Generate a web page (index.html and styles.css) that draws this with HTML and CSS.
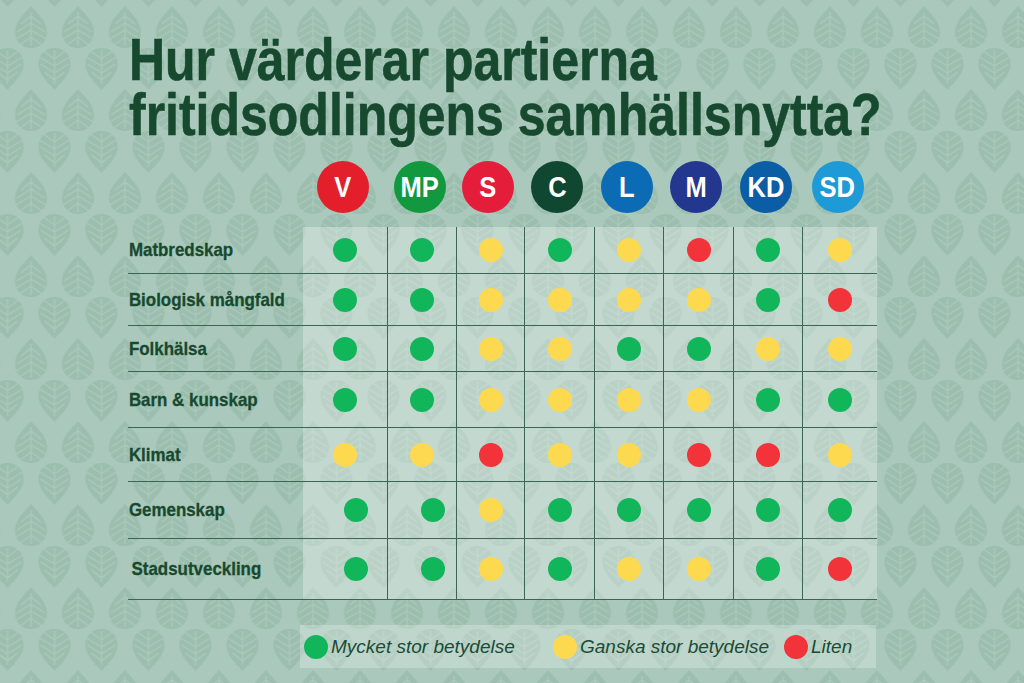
FILE: index.html
```html
<!DOCTYPE html>
<html lang="sv">
<head>
<meta charset="utf-8">
<title>Hur värderar partierna fritidsodlingens samhällsnytta?</title>
<link rel="stylesheet" href="styles.css">
</head>
<body>
<svg class="bg" width="1024" height="683" aria-hidden="true">
  <defs>
    <g id="leaf">
      <path class="leaf-body" d="M0,-21 C6,-14 16,-6 16,5 C16,15 9,21 0,21 C-9,21 -16,15 -16,5 C-16,-6 -6,-14 0,-21 Z"/>
      <path class="leaf-vein" d="M0,-15 L0,19 M-10,-3 L0,-11 L10,-3 M-14,5 L0,-4 L14,5 M-15,12 L0,3 L15,12 M-11,18 L0,10 L11,18"/>
    </g>
    <pattern id="leaves" patternUnits="userSpaceOnUse" x="7.5" y="0" width="47" height="83">
      <use href="#leaf" transform="translate(23.5,27)"/>
      <use href="#leaf" transform="translate(0,69) rotate(180)"/>
      <use href="#leaf" transform="translate(47,69) rotate(180)"/>
      <use href="#leaf" transform="translate(0,-14) rotate(180)"/>
      <use href="#leaf" transform="translate(47,-14) rotate(180)"/>
    </pattern>
  </defs>
  <rect width="1024" height="683" fill="url(#leaves)"/>
</svg>

<main class="page">
  <h1 class="title">Hur värderar partierna<br>fritidsodlingens samhällsnytta?</h1>

  <div class="parties">
    <span class="spacer"></span>
    <span class="cell"><span class="party v"><span class="abbr">V</span></span></span>
    <span class="cell"><span class="party mp"><span class="abbr">MP</span></span></span>
    <span class="cell"><span class="party s"><span class="abbr">S</span></span></span>
    <span class="cell"><span class="party c"><span class="abbr">C</span></span></span>
    <span class="cell"><span class="party l"><span class="abbr">L</span></span></span>
    <span class="cell"><span class="party m"><span class="abbr">M</span></span></span>
    <span class="cell"><span class="party kd"><span class="abbr">KD</span></span></span>
    <span class="cell"><span class="party sd"><span class="abbr">SD</span></span></span>
  </div>

  <div class="table">
    <div class="row r1">
      <span class="label">Matbredskap</span>
      <span class="cell"><i class="dot g"></i></span>
      <span class="cell"><i class="dot g"></i></span>
      <span class="cell"><i class="dot y"></i></span>
      <span class="cell"><i class="dot g"></i></span>
      <span class="cell"><i class="dot y"></i></span>
      <span class="cell"><i class="dot r"></i></span>
      <span class="cell"><i class="dot g"></i></span>
      <span class="cell"><i class="dot y"></i></span>
    </div>
    <div class="row r2">
      <span class="label">Biologisk mångfald</span>
      <span class="cell"><i class="dot g"></i></span>
      <span class="cell"><i class="dot g"></i></span>
      <span class="cell"><i class="dot y"></i></span>
      <span class="cell"><i class="dot y"></i></span>
      <span class="cell"><i class="dot y"></i></span>
      <span class="cell"><i class="dot y"></i></span>
      <span class="cell"><i class="dot g"></i></span>
      <span class="cell"><i class="dot r"></i></span>
    </div>
    <div class="row r3">
      <span class="label">Folkhälsa</span>
      <span class="cell"><i class="dot g"></i></span>
      <span class="cell"><i class="dot g"></i></span>
      <span class="cell"><i class="dot y"></i></span>
      <span class="cell"><i class="dot y"></i></span>
      <span class="cell"><i class="dot g"></i></span>
      <span class="cell"><i class="dot g"></i></span>
      <span class="cell"><i class="dot y"></i></span>
      <span class="cell"><i class="dot y"></i></span>
    </div>
    <div class="row r4">
      <span class="label">Barn &amp; kunskap</span>
      <span class="cell"><i class="dot g"></i></span>
      <span class="cell"><i class="dot g"></i></span>
      <span class="cell"><i class="dot y"></i></span>
      <span class="cell"><i class="dot y"></i></span>
      <span class="cell"><i class="dot y"></i></span>
      <span class="cell"><i class="dot y"></i></span>
      <span class="cell"><i class="dot g"></i></span>
      <span class="cell"><i class="dot g"></i></span>
    </div>
    <div class="row r5">
      <span class="label">Klimat</span>
      <span class="cell"><i class="dot y"></i></span>
      <span class="cell"><i class="dot y"></i></span>
      <span class="cell"><i class="dot r"></i></span>
      <span class="cell"><i class="dot y"></i></span>
      <span class="cell"><i class="dot y"></i></span>
      <span class="cell"><i class="dot r"></i></span>
      <span class="cell"><i class="dot r"></i></span>
      <span class="cell"><i class="dot y"></i></span>
    </div>
    <div class="row r6">
      <span class="label">Gemenskap</span>
      <span class="cell"><i class="dot g shift"></i></span>
      <span class="cell"><i class="dot g shift"></i></span>
      <span class="cell"><i class="dot y"></i></span>
      <span class="cell"><i class="dot g"></i></span>
      <span class="cell"><i class="dot g"></i></span>
      <span class="cell"><i class="dot g"></i></span>
      <span class="cell"><i class="dot g"></i></span>
      <span class="cell"><i class="dot g"></i></span>
    </div>
    <div class="row r7">
      <span class="label label-indent">Stadsutveckling</span>
      <span class="cell"><i class="dot g shift"></i></span>
      <span class="cell"><i class="dot g shift"></i></span>
      <span class="cell"><i class="dot y"></i></span>
      <span class="cell"><i class="dot g"></i></span>
      <span class="cell"><i class="dot y"></i></span>
      <span class="cell"><i class="dot y"></i></span>
      <span class="cell"><i class="dot g"></i></span>
      <span class="cell"><i class="dot r"></i></span>
    </div>
  </div>

  <div class="legend">
    <span class="legend-item li-1"><i class="dot g"></i>Mycket stor betydelse</span>
    <span class="legend-item li-2"><i class="dot y"></i>Ganska stor betydelse</span>
    <span class="legend-item"><i class="dot r"></i>Liten</span>
  </div>
</main>
</body>
</html>
```

FILE: styles.css
```css
* { box-sizing: border-box; }

html, body {
  margin: 0;
  padding: 0;
}

body {
  width: 1024px;
  height: 683px;
  overflow: hidden;
  position: relative;
  background: #aac8bb;
  font-family: "Liberation Sans", Arial, sans-serif;
  color: #184a33;
}

.bg {
  position: absolute;
  left: 0;
  top: 0;
  z-index: 0;
}

.leaf-body { fill: #9cbeae; }
.leaf-vein { fill: none; stroke: #aac8bb; stroke-width: 1.4; }

.page {
  position: relative;
  z-index: 1;
  padding: 32px 0 0 128px;
}

.title {
  margin: 0 0 0 1px;
  font-size: 60px;
  line-height: 55px;
  font-weight: 700;
  color: #17492f;
  white-space: nowrap;
  transform: scaleX(0.833);
  transform-origin: left top;
  -webkit-text-stroke: 0.6px #17492f;
}

.parties,
.row {
  display: grid;
  width: 749px;
  grid-template-columns: 175px 84px 69px 68px 70px 69px 70px 69px 75px;
}

.parties {
  margin-top: 19px;
  height: 52px;
  align-items: center;
}

.parties .cell {
  display: flex;
  justify-content: center;
}

.party {
  width: 52px;
  height: 52px;
  border-radius: 50%;
  display: flex;
  align-items: center;
  justify-content: center;
  color: #fff;
  font-weight: 700;
  font-size: 29px;
  margin-right: 4px;
}

.abbr {
  display: inline-block;
  transform: scaleX(0.88);
  line-height: 1;
}

.party.v { background: #e21f2b; }
.party.mp { background: #12993f; }
.party.s { background: #e41d3b; }
.party.c { background: #0f4730; }
.party.l { background: #0c6bb5; }
.party.m { background: #23378f; }
.party.kd { background: #0b5da6; }
.party.sd { background: #1e9ad7; }

.table {
  margin-top: 14px;
}

.row {
  border-bottom: 1px solid #3d6553;
  align-items: stretch;
}

.r1 { height: 47px; }
.r2 { height: 52px; }
.r3 { height: 46px; }
.r4 { height: 56px; }
.r5 { height: 54px; }
.r6 { height: 57px; }
.r7 { height: 61px; }

.label {
  display: flex;
  align-items: center;
  padding-left: 1px;
  font-size: 19px;
  font-weight: 700;
  color: #17492f;
  white-space: nowrap;
  transform: scaleX(0.89);
  transform-origin: left center;
  -webkit-text-stroke: 0.3px #17492f;
}

.label-indent { padding-left: 4px; }

.row .cell {
  display: flex;
  align-items: center;
  justify-content: center;
  background: rgba(255, 255, 255, 0.3);
}

.row .cell + .cell {
  border-left: 1px solid #3d6553;
}

.dot {
  display: block;
  width: 24px;
  height: 24px;
  border-radius: 50%;
  flex: none;
}

.dot.g { background: #12b65a; }
.dot.y { background: #fdd94f; }
.dot.r { background: #f2333a; }

.dot.shift { margin-left: 22px; }

.legend {
  margin: 25px 0 0 172px;
  width: 576px;
  height: 43px;
  display: flex;
  align-items: center;
  padding-left: 4px;
  background: rgba(255, 255, 255, 0.25);
}

.legend-item {
  display: flex;
  align-items: center;
  gap: 3px;
  font-size: 19px;
  font-style: italic;
  color: #1a4b35;
  white-space: nowrap;
}

.li-1 { width: 249px; }
.li-2 { width: 231px; }
```
